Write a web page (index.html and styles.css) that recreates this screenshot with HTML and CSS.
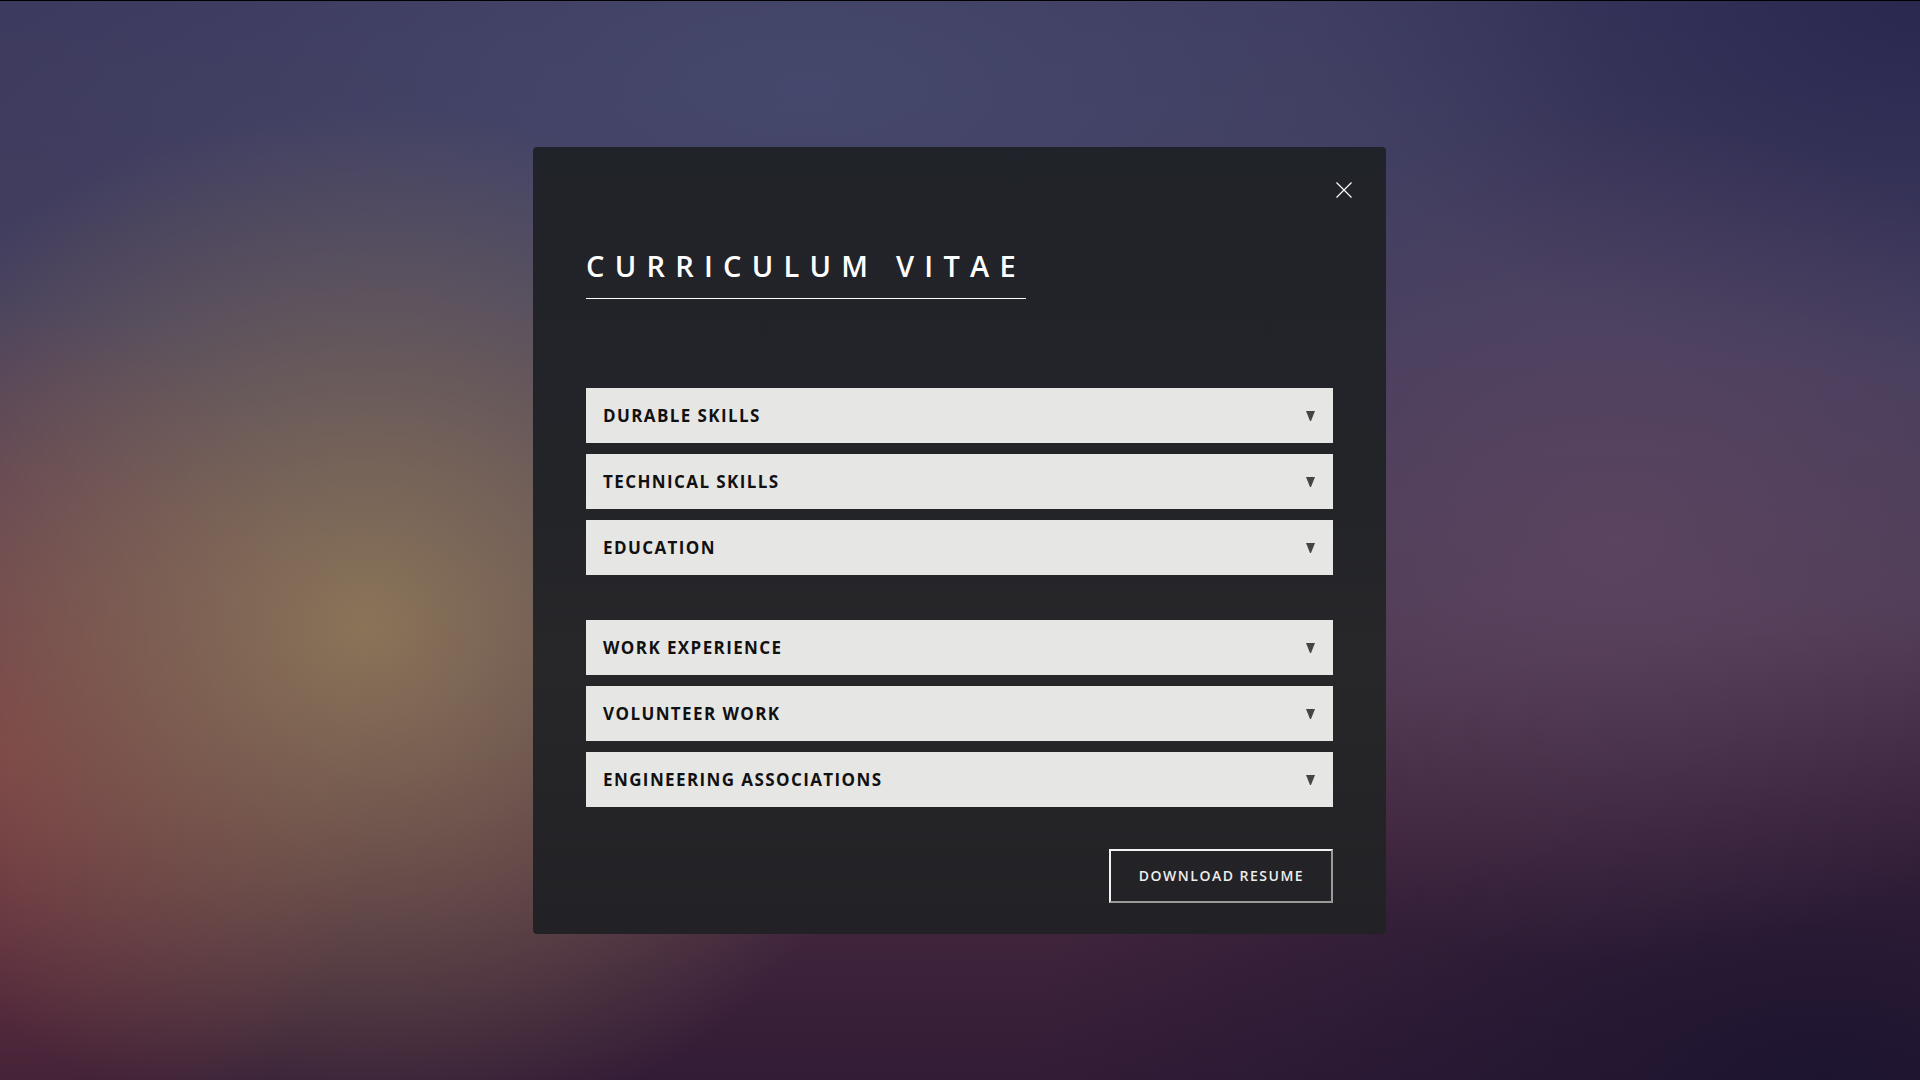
FILE: index.html
```html
<!DOCTYPE html>
<html lang="en">
<head>
<meta charset="utf-8">
<title>Curriculum Vitae</title>
<link rel="stylesheet" href="styles.css">
</head>
<body>
<div class="backdrop">
  <section class="modal">
    <button class="close" aria-label="Close">
      <svg width="16" height="16" viewBox="0 0 16 16"><path d="M0.5 0.5 L15.5 15.5 M15.5 0.5 L0.5 15.5" stroke="#fff" stroke-width="1.2" fill="none"/></svg>
    </button>
    <h1 class="title">CURRICULUM VITAE</h1>
    <div class="group">
      <div class="item"><span>DURABLE SKILLS</span><svg class="arrow" width="9" height="10" viewBox="0 0 9 10"><path d="M0 0 H9 L5 10 H4 Z" fill="#454545"/></svg></div>
      <div class="item"><span>TECHNICAL SKILLS</span><svg class="arrow" width="9" height="10" viewBox="0 0 9 10"><path d="M0 0 H9 L5 10 H4 Z" fill="#454545"/></svg></div>
      <div class="item"><span>EDUCATION</span><svg class="arrow" width="9" height="10" viewBox="0 0 9 10"><path d="M0 0 H9 L5 10 H4 Z" fill="#454545"/></svg></div>
    </div>
    <div class="group">
      <div class="item"><span>WORK EXPERIENCE</span><svg class="arrow" width="9" height="10" viewBox="0 0 9 10"><path d="M0 0 H9 L5 10 H4 Z" fill="#454545"/></svg></div>
      <div class="item"><span>VOLUNTEER WORK</span><svg class="arrow" width="9" height="10" viewBox="0 0 9 10"><path d="M0 0 H9 L5 10 H4 Z" fill="#454545"/></svg></div>
      <div class="item"><span>ENGINEERING ASSOCIATIONS</span><svg class="arrow" width="9" height="10" viewBox="0 0 9 10"><path d="M0 0 H9 L5 10 H4 Z" fill="#454545"/></svg></div>
    </div>
    <div class="actions">
      <button class="download">DOWNLOAD RESUME</button>
    </div>
  </section>
</div>
</body>
</html>
```
FILE: styles.css
```css
* { box-sizing: border-box; }
html, body { margin: 0; padding: 0; height: 100%; }
body {
  font-family: "Open Sans", "Liberation Sans", sans-serif;
  border-top: 1px solid #000;
  background:
    radial-gradient(ellipse 560px 520px at 19% 58%, rgba(145,122,88,0.9), rgba(145,122,88,0) 100%),
    radial-gradient(ellipse 380px 460px at 0% 70%, rgba(135,60,65,0.75), rgba(135,60,65,0) 100%),
    radial-gradient(ellipse 800px 330px at 42% 8%, rgba(70,74,110,0.85), rgba(70,74,110,0) 100%),
    radial-gradient(ellipse 520px 420px at 84% 50%, rgba(100,72,100,0.6), rgba(100,72,100,0) 100%),
    radial-gradient(ellipse 800px 450px at 95% 100%, rgba(28,20,48,0.95), rgba(28,20,48,0) 100%),
    radial-gradient(ellipse 600px 380px at 100% 0%, rgba(40,38,78,0.9), rgba(40,38,78,0) 100%),
    linear-gradient(180deg, #3c3a5e 0%, #443f5f 30%, #4d3c56 55%, #47293f 78%, #331c36 100%);
  overflow: hidden;
}
.backdrop {
  height: 1079px;
  display: flex;
  align-items: center;
  justify-content: center;
  padding-right: 1px;
}
.modal {
  position: relative;
  width: 853px;
  height: 787px;
  margin-top: -1px;
  border-radius: 4px;
  padding: 100px 53px 0 53px;
  background: linear-gradient(180deg, #21232a 0%, #232428 45%, #27272a 65%, #222226 100%);
}
.close {
  position: absolute;
  top: 35px;
  right: 34px;
  width: 16px;
  height: 16px;
  padding: 0;
  border: 0;
  background: none;
  display: block;
}
.close svg { display: block; }
.title {
  display: inline-block;
  margin: 0;
  font-size: 29px;
  font-weight: 600;
  line-height: 38px;
  letter-spacing: 10.25px;
  color: #fff;
  padding-bottom: 13px;
  border-bottom: 1px solid #fff;
}
.group {
  display: flex;
  flex-direction: column;
  gap: 11px;
}
.title + .group { margin-top: 89px; }
.group + .group { margin-top: 45px; }
.item {
  height: 55px;
  background: #e6e6e4;
  display: flex;
  align-items: center;
  justify-content: space-between;
  padding: 0 18px 0 17px;
  font-size: 17px;
  font-weight: 700;
  letter-spacing: 1.4px;
  color: #111;
}
.arrow { display: block; margin-top: 2px; }
.actions {
  display: flex;
  justify-content: flex-end;
  margin-top: 42px;
}
.download {
  width: 224px;
  height: 54px;
  background: transparent;
  color: #eee;
  font-family: "Open Sans", "Liberation Sans", sans-serif;
  font-size: 14px;
  font-weight: 600;
  letter-spacing: 1.5px;
  border: 2px solid;
  border-color: #f2f2f2 #9a9a9a #9a9a9a #f2f2f2;
  padding: 0 0 0 1px;
}
```
